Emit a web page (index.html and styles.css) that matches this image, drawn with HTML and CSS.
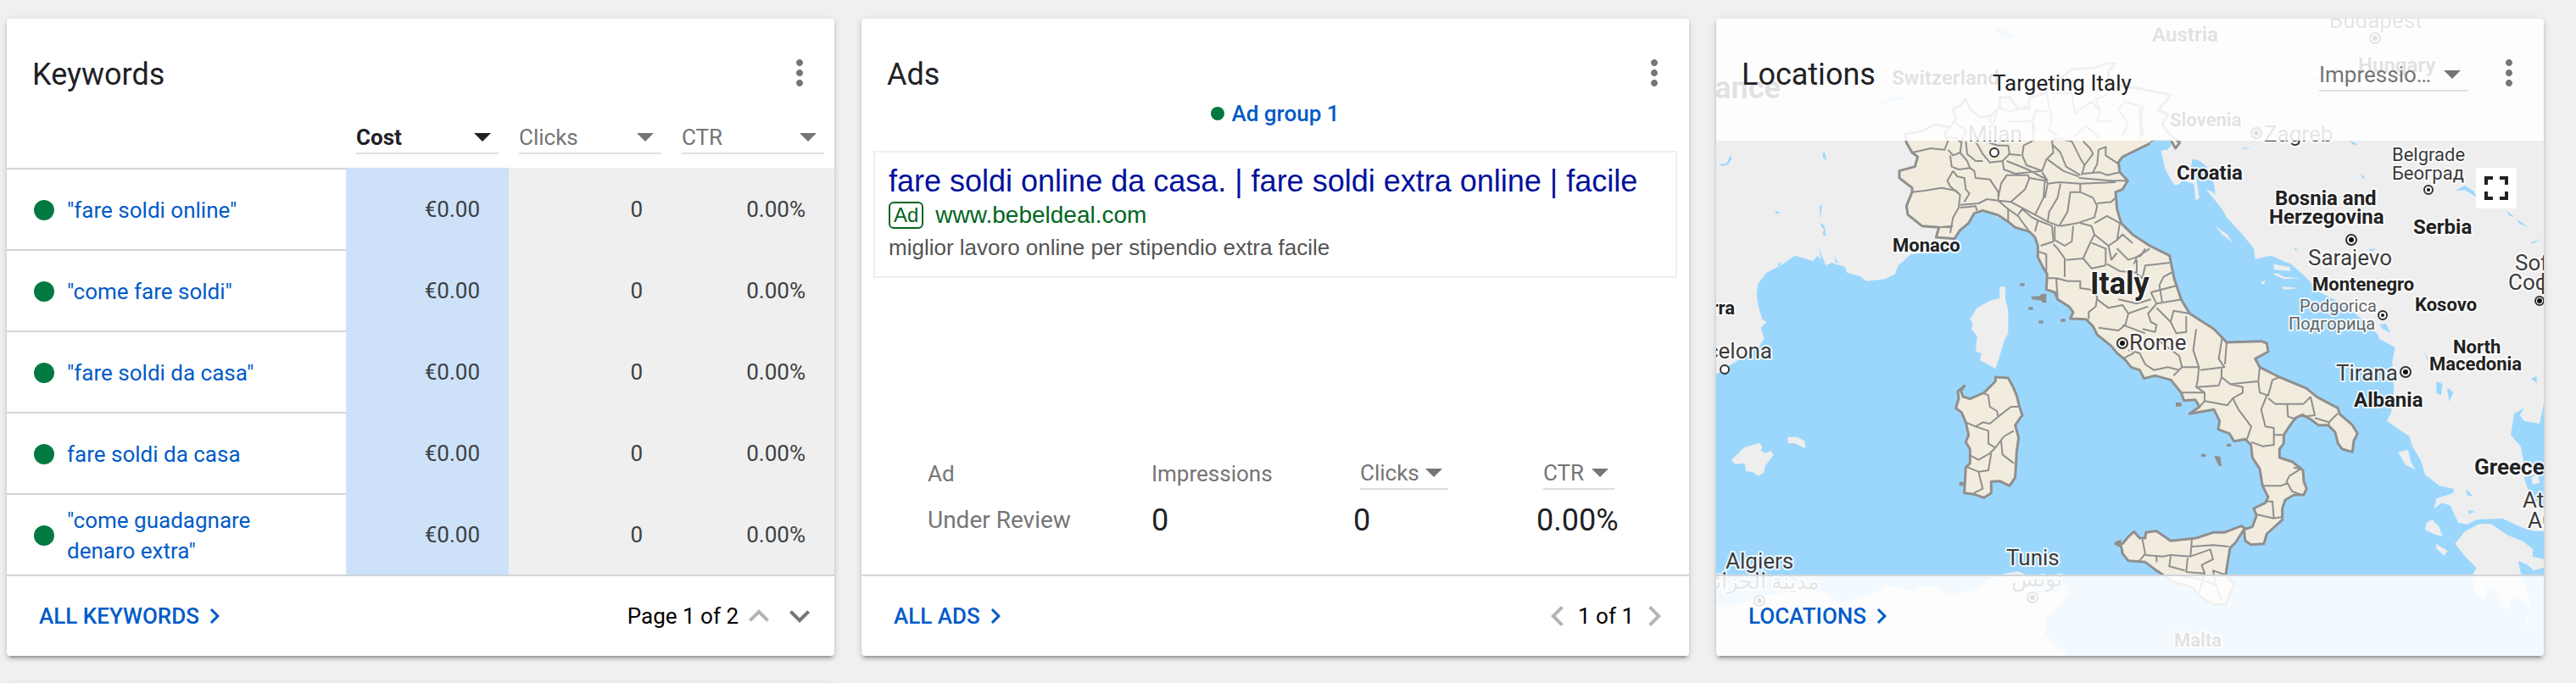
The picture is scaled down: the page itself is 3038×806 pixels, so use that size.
FILE: index.html
```html
<!DOCTYPE html>
<html lang="en">
<head>
<meta charset="utf-8">
<title>Overview</title>
<link rel="stylesheet" href="styles.css">
</head>
<body>
<svg class="sprite" aria-hidden="true">
  <symbol id="i-more" viewBox="0 0 24 24"><path d="M12 8c1.100 0 2-.9 2-2s-.9-2-2-2-2 .9-2 2 .9 2 2 2zm0 2c-1.100 0-2 .9-2 2s.9 2 2 2 2-.9 2-2-.9-2-2-2zm0 6c-1.100 0-2 .9-2 2s.9 2 2 2 2-.9 2-2-.9-2-2-2z"/></symbol>
  <symbol id="i-drop" viewBox="0 0 24 24"><path d="M7 10l5 5 5-5z"/></symbol>
  <symbol id="i-right" viewBox="0 0 24 24"><path d="M10 6L8.590 7.410 13.170 12l-4.580 4.590L10 18l6-6z"/></symbol>
  <symbol id="i-left" viewBox="0 0 24 24"><path d="M15.410 7.410L14 6l-6 6 6 6 1.410-1.410L10.830 12z"/></symbol>
  <symbol id="i-up" viewBox="0 0 24 24"><path d="M12 8l-6 6 1.410 1.410L12 10.830l4.590 4.580L18 14z"/></symbol>
  <symbol id="i-down" viewBox="0 0 24 24"><path d="M16.590 8.590L12 13.170 7.410 8.590 6 10l6 6 6-6z"/></symbol>
  <symbol id="i-full" viewBox="0 0 24 24"><path d="M7 14H5v5h5v-2H7v-3zm-2-4h2V7h3V5H5v5zm12 7h-3v2h5v-5h-2v3zM14 5v2h3v3h2V5h-5z"/></symbol>
</svg>

<main class="board">
  <section class="card">
    <header class="card-head">
      <h2 class="title">Keywords</h2>
      <button class="icon-btn" type="button" aria-label="More options"><svg class="icon"><use href="#i-more"/></svg></button>
    </header>
    <table class="kw">
      <colgroup><col><col class="kw-metric"><col class="kw-metric"><col class="kw-metric"></colgroup>
      <thead>
        <tr>
          <td></td>
          <th scope="col"><div class="pick pick-active"><select class="pick-select" aria-label="First metric"><option>Cost</option></select><svg class="icon pick-arrow"><use href="#i-drop"/></svg></div></th>
          <th scope="col"><div class="pick"><select class="pick-select" aria-label="Second metric"><option>Clicks</option></select><svg class="icon pick-arrow"><use href="#i-drop"/></svg></div></th>
          <th scope="col"><div class="pick"><select class="pick-select" aria-label="Third metric"><option>CTR</option></select><svg class="icon pick-arrow"><use href="#i-drop"/></svg></div></th>
        </tr>
      </thead>
      <tbody>
        <tr><th scope="row"><div class="kw-name"><span class="dot"></span><a href="#">"fare soldi online"</a></div></th><td class="hot">€0.00</td><td>0</td><td>0.00%</td></tr>
        <tr><th scope="row"><div class="kw-name"><span class="dot"></span><a href="#">"come fare soldi"</a></div></th><td class="hot">€0.00</td><td>0</td><td>0.00%</td></tr>
        <tr><th scope="row"><div class="kw-name"><span class="dot"></span><a href="#">"fare soldi da casa"</a></div></th><td class="hot">€0.00</td><td>0</td><td>0.00%</td></tr>
        <tr><th scope="row"><div class="kw-name"><span class="dot"></span><a href="#">fare soldi da casa</a></div></th><td class="hot">€0.00</td><td>0</td><td>0.00%</td></tr>
        <tr><th scope="row"><div class="kw-name"><span class="dot"></span><a href="#">"come guadagnare denaro extra"</a></div></th><td class="hot">€0.00</td><td>0</td><td>0.00%</td></tr>
      </tbody>
    </table>
    <footer class="card-foot">
      <a class="more" href="#">ALL KEYWORDS<svg class="icon more-icon"><use href="#i-right"/></svg></a>
      <div class="pager">
        <span>Page 1 of 2</span>
        <button class="icon-btn faded" type="button" aria-label="Previous page"><svg class="icon"><use href="#i-up"/></svg></button>
        <button class="icon-btn" type="button" aria-label="Next page"><svg class="icon"><use href="#i-down"/></svg></button>
      </div>
    </footer>
  </section>

  <section class="card">
    <header class="card-head">
      <h2 class="title">Ads</h2>
      <button class="icon-btn" type="button" aria-label="More options"><svg class="icon"><use href="#i-more"/></svg></button>
    </header>
    <p class="group"><span class="dot dot-small"></span><a href="#">Ad group 1</a></p>
    <article class="ad">
      <h3 class="ad-title">fare soldi online da casa. | fare soldi extra online | facile</h3>
      <p class="ad-url"><span class="ad-badge">Ad</span><span>www.bebeldeal.com</span></p>
      <p class="ad-text">miglior lavoro online per stipendio extra facile</p>
    </article>
    <table class="stats">
      <colgroup><col class="stats-a"><col class="stats-b"><col class="stats-c"><col></colgroup>
      <thead>
        <tr>
          <th scope="col">Ad</th>
          <th scope="col">Impressions</th>
          <th scope="col"><div class="pick pick-tight pick-clicks"><select class="pick-select" aria-label="Metric"><option>Clicks</option></select><svg class="icon pick-arrow"><use href="#i-drop"/></svg></div></th>
          <th scope="col"><div class="pick pick-tight pick-ctr"><select class="pick-select" aria-label="Rate metric"><option>CTR</option></select><svg class="icon pick-arrow"><use href="#i-drop"/></svg></div></th>
        </tr>
      </thead>
      <tbody>
        <tr><th scope="row">Under Review</th><td>0</td><td>0</td><td>0.00%</td></tr>
      </tbody>
    </table>
    <footer class="card-foot">
      <a class="more" href="#">ALL ADS<svg class="icon more-icon"><use href="#i-right"/></svg></a>
      <div class="pager">
        <button class="icon-btn faded" type="button" aria-label="Previous ad"><svg class="icon"><use href="#i-left"/></svg></button>
        <span>1 of 1</span>
        <button class="icon-btn faded" type="button" aria-label="Next ad"><svg class="icon"><use href="#i-right"/></svg></button>
      </div>
    </footer>
  </section>

  <section class="card card-map">
    <svg class="map" viewBox="0 0 976 752" preserveAspectRatio="xMidYMid slice" role="img" aria-label="Map of Italy">
      <g transform="translate(-14 -22) scale(.33333)">
        <g class="land">
          <path d="M42 66H2970V1430L2955 1500 2900 1490 2885 1470 2900 1445 2865 1465 2853 1540 2888 1580 2900 1640 2940 1680 2900 1690 2920 1750 2970 1800V1880H2934L2894 1868 2823 1835 2732 1840 2700 1856 2667 1850 2640 1790 2610 1780 2582 1800 2590 1765 2651 1745 2651 1730 2601 1720 2550 1680 2535 1630 2505 1580 2495 1545 2414 1490 2430 1460 2440 1380 2434 1280 2444 1230 2389 1200 2379 1180 2348 1150 2278 1090 2227 1060 2167 1030 2146 1000 2111 965 2076 935 2005 905 1949 917 1944 880 1904 830 1848 770 1808 690 1803 650 1778 590 1752 570 1727 562 1722 590 1742 640 1752 700 1738 710 1732 650 1692 640 1677 655 1662 655 1631 600 1616 535 1650 520V480H1600L1485 555 1465 575 1470 610 1498 640 1480 670 1455 680H1200L1075 785 985 745 955 755 905 815 885 845 860 870 790 895 730 900 715 915 685 940 675 970 640 988 575 995 550 978 505 965 497 945 450 930 430 940 400 905 385 925 345 912 320 905 270 940 220 965 190 1005 185 1040 190 1080 205 1130 220 1140 200 1160 212 1200 195 1225 120 1275 80 1300 42 1325z"/>
          <path d="M1045 1015H1065V1060L1075 1100V1180L1060 1210 1045 1260 1030 1305 975 1275 980 1250 960 1245 965 1190 945 1165 950 1150 940 1130 965 1090 1010 1065 1045 1055z"/>
          <path d="M95 1630L140 1585 195 1568 205 1580 200 1595 215 1605 235 1597 245 1610 215 1650 210 1675 190 1685 175 1673 147 1667 143 1640 110 1643zM295 1547L330 1547 355 1562 358 1588 320 1570 295 1568z"/>
          <path d="M42 2145L120 2140 200 2110 330 2090 430 2100 470 2135 530 2120 570 2110 630 2090 640 2070 690 2080 740 2095 770 2072 830 2080 860 2105 960 2090 1000 2055 1060 2032 1110 2022 1150 2040 1180 2100 1240 2100 1280 2070 1290 2100 1250 2150 1210 2190 1205 2240 1240 2290 1280 2310V2330H42z"/>
          <path d="M2656 1925L2692 1880 2742 1855 2783 1855 2843 1895 2894 1915 2932 1945 2930 1970 2970 1980V2010L2934 2020 2914 2000 2879 1985 2889 2030 2914 2100 2920 2150 2934 2175 2884 2110 2850 2125 2843 2170 2823 2140 2793 2080 2768 2080 2762 2120 2727 2100 2717 2040 2732 2010 2692 1970zM2455 1600L2490 1593 2500 1635 2515 1663 2480 1645zM2555 1850L2575 1840 2600 1865 2612 1900 2580 1890 2550 1875zM2588 1925L2630 1950 2617 1968 2590 1942zM2905 2190L2915 2185 2920 2225 2905 2215z"/>
          <path d="M2015 935L2070 945 2075 960 2015 955zM2010 970L2030 968 2050 980 2110 985 2050 988zM2045 1015L2105 1020 2050 1025zM1968 1000L1985 993 1980 1008zM1775 670L1800 680 1850 740 1888 772 1850 765 1820 725zM1808 800L1850 830 1870 860 1830 828z"/>
          <path d="M2925 1690L2950 1680 2955 1710 2930 1715zM2895 1820L2940 1850 2970 1845V1870L2920 1870z"/>
        </g>
        <g class="water">
          <path d="M52 582L80 578 92 550 97 560 85 582 62 588zM418 545L426 538 432 565 422 562zM248 752L258 748 268 753 258 757zM408 725L416 730 410 775zM413 788L425 800 430 835 418 830 424 812 413 800zM405 880L430 940 415 930zM460 908L475 932 465 930zM258 935L275 925 265 942z"/>
          <path d="M1020 88L1100 128 1060 138 1035 115zM612 388C630 350 670 330 715 350C680 352 640 355 612 388zM125 95L160 128 140 118zM960 400L975 410 965 420zM1340 180L1390 155 1360 178zM2130 288C2170 280 2200 265 2250 230L2238 258C2200 275 2170 290 2130 292z"/>
          <path d="M1905 523L1935 525 1905 528zM2280 495L2312 512 2295 512zM2322 615L2338 630 2328 632zM2086 880H2098L2092 888zM2656 675L2690 658 2720 675 2735 700 2690 672zM2837 745L2865 768 2850 765zM2872 775L2915 803 2885 792zM2922 858L2960 848 2930 862zM2389 1150L2410 1145 2428 1178 2400 1165zM2350 882L2378 880 2358 890zM2590 1350L2612 1360 2606 1400 2590 1392zM2628 1372L2650 1390 2635 1422zM2548 1245L2562 1275 2555 1270zM2925 1340L2945 1332V1355zM2694 1730L2718 1755 2700 1755zM2705 1805L2725 1812 2705 1820z"/>
        </g>
        <path class="region" d="M885 845L905 815 935 790 955 755 985 745 1040 762 1075 785 1100 805 1150 820 1170 840 1180 870V910L1200 950 1213 970 1210 1025 1240 1035 1250 1060 1290 1085 1305 1105 1295 1128 1350 1130 1375 1155 1390 1185 1440 1225 1460 1250 1490 1275 1510 1300 1540 1310 1556 1340 1596 1330 1651 1345 1687 1390 1697 1418 1737 1415 1752 1440 1717 1465 1803 1450 1823 1490 1818 1520 1858 1535 1874 1562 1914 1555 1934 1575 1939 1620 1965 1660 1975 1720 1995 1760 1985 1780 1944 1800 1954 1825 1939 1865 1909 1875 1914 1915 1934 1928 1980 1925 1990 1890 2045 1840V1800L2055 1770 2086 1752 2121 1752 2131 1730 2121 1705 2118 1665 2081 1635 2035 1620V1590L2050 1570V1540L2066 1515 2091 1480 2116 1468 2146 1485 2172 1505 2207 1505 2232 1530 2242 1570 2257 1590 2293 1600 2298 1560 2311 1535 2293 1505 2247 1465 2242 1445 2167 1405 2131 1375 2035 1335 1965 1300 1949 1270 1995 1245 1990 1215 1970 1208 1848 1212 1803 1165 1717 1110 1687 1060 1662 985 1646 905 1576 870 1515 830 1475 790 1460 740 1455 680 1480 670 1498 640 1470 610 1465 575 1480 555 1576 508 1591 498 1651 498 1667 525 1682 505 1641 470 1620 440 1641 405 1606 390 1651 335 1530 312 1450 300 1430 290V250L1455 225H1420L1380 240 1300 245 1270 270 1210 300V330L1150 345V385H1110L1080 345H1045V380L1015 410 975 415 940 385 925 350 905 375 880 385 890 420 870 450 815 440 770 465 710 475 715 505 735 540 755 555 745 590 690 605V630L735 665V680L715 730 720 760 770 800 830 805 820 840z"/>
        <path class="water" d="M1576 508L1591 498H1651L1640 530H1590z"/>
        <path class="region" d="M1030 1335L1075 1338 1090 1365 1105 1400 1115 1440 1125 1470 1100 1505 1112 1550 1105 1600 1100 1690 1080 1720 1045 1703 1015 1705V1745L990 1762 955 1750 920 1745 925 1655 940 1640V1590L925 1565 935 1540 925 1495 910 1460 890 1445 900 1410 897 1385 920 1366 908 1385 915 1404 940 1412 990 1390 1030 1350z"/>
        <path class="region" d="M1455 1925L1480 1925 1500 1900 1520 1882 1540 1905 1560 1905 1562 1885 1600 1880 1650 1915 1740 1905 1800 1885 1840 1885 1900 1862 1912 1870 1880 1920 1860 1940 1850 2000 1845 2035 1875 2070 1860 2100 1845 2140 1800 2140 1750 2110 1730 2080 1660 2060 1600 2020 1560 1990 1500 1985 1480 1960 1475 1935z"/>
        <g class="provinces">
          <path d="M735 540L760 535 800 525 850 530 862 500 850 470 870 450M862 530L880 550 905 540 910 505 890 490 850 485M870 550L875 590 900 600 940 595 930 570 905 540M880 605L860 640 870 660 905 690M880 605L895 625 920 630 925 670 938 685 920 715M735 680L780 675 840 665 890 675 905 690 900 735 880 770 870 825M905 735L960 730 965 745M830 805L880 800"/>
          <path d="M940 595L955 605 960 630 1010 635 1040 680V710L1000 705 970 720 905 725M925 500L930 545 960 570 985 570M960 500L985 545 1010 575 1055 570 1080 545 1075 515 1040 515 1005 505M1040 700L1050 650 1070 620 1145 620 1150 630 1135 670 1085 715 1040 710M1055 570L1060 600 1100 615 1195 605 1140 585 1125 550 1130 515 1160 500M1075 545L1120 550M1070 570L1145 600 1200 630"/>
          <path d="M1195 605L1210 565 1235 540 1230 500 1245 490 1300 500M1215 565L1270 605 1325 625M1300 500L1330 560 1345 585 1335 620M1230 510L1260 540 1280 590 1330 620M1345 585L1375 545 1365 525 1340 500M1340 615L1400 610 1425 620 1470 610M1390 580L1395 530 1420 520V550L1465 580M1325 630L1440 640 1495 640M1200 625L1215 650 1255 645 1330 650 1455 645M1195 610L1215 640M1390 580L1375 610"/>
          <path d="M1150 630L1205 640 1200 700 1170 760 1085 715M1205 700L1215 650M1260 650L1250 700 1220 750 1215 785M1330 650V680L1295 680 1285 750 1255 800 1215 785 1170 760M1330 680L1375 700 1390 730 1380 770 1320 790 1260 800M1390 720L1440 715 1455 700M1380 790L1425 765 1470 790M1075 740V785M1075 740L1040 710M1075 740L1110 765 1150 820M1110 760L1125 740 1160 770 1180 780 1170 820M1180 780L1230 800 1235 855 1190 870"/>
          <path d="M1240 800V850L1275 870 1300 855 1305 800M1330 790L1370 800 1380 830 1365 860 1340 915 1280 920M1235 865L1250 880 1275 915V980M1180 890L1210 900V960M1380 830L1430 870 1460 850 1470 790M1370 860L1420 880V940M1430 870L1440 920 1460 895M1460 880L1500 920 1545 905 1560 880M1460 850L1480 830 1515 860M1425 935L1470 960 1530 965V920M1245 985L1285 995H1330V1020L1365 1025 1390 1050 1385 1085 1360 1105V1130M1215 985H1245L1250 1055M1340 915L1370 950 1420 940"/>
          <path d="M1390 1060L1430 1090 1480 1080 1500 1110 1490 1150 1465 1170 1395 1160M1500 1110L1570 1085M1480 1150L1560 1180M1465 1060L1530 1075 1580 1060M1530 970L1550 985 1560 940 1646 930M1520 935L1530 910 1576 880M1610 1010L1625 980 1662 960M1580 1035L1675 1010M1580 1035L1600 1075 1690 1060M1600 1075L1570 1110 1580 1140 1600 1150 1595 1175 1550 1165M1600 1090L1650 1140 1660 1100 1717 1110M1650 1140L1670 1180 1705 1175V1120M1610 1010L1620 1070"/>
          <path d="M1500 1240L1540 1250 1560 1290 1590 1310 1640 1300 1680 1310M1480 1270L1520 1250M1600 1200L1680 1260 1690 1300 1660 1330M1740 1165L1730 1240 1750 1300H1690M1833 1190L1820 1270 1840 1300 1755 1310M1750 1300L1745 1350 1740 1370 1770 1390H1690M1830 1300V1335L1860 1360 1905 1370V1390L1870 1410 1850 1435 1770 1420V1390M1745 1370L1820 1365 1830 1335M1848 1212L1842 1290M1860 1360L1960 1350 1965 1300M1960 1350L1965 1390 1995 1400 2010 1345 2035 1335"/>
          <path d="M1995 1410L2020 1430H2120L2145 1405M1752 1440L1770 1420M1870 1410L1890 1450 1935 1510 1920 1555M1990 1400L1970 1450 1985 1510 2015 1515V1575L1975 1580 1935 1565M2062 1430L2065 1475 2095 1485M2015 1540H2050M2145 1405L2160 1470 2120 1475M2160 1480L2210 1495 2240 1465M2210 1495V1510M2085 1655L2110 1660 2070 1685 2060 1705 2080 1740 2110 1750M1975 1720H2040L2065 1710M1990 1775H2010L2015 1835 1950 1820M2015 1835L2045 1830"/>
          <path d="M985 1390L1005 1400 1010 1440 1035 1455 1040 1475 1085 1440H1110M1040 1475L1010 1500 985 1495 960 1510 925 1495M960 1510L1005 1525V1570L1030 1585 1060 1545 1095 1525M1050 1560L1055 1610 1095 1640M1030 1585L1010 1605 970 1628 940 1612M1015 1605L1005 1665 970 1670 925 1652M970 1670L985 1730 955 1745"/>
          <path d="M1550 1910L1560 1960 1540 1985M1560 1965L1620 1970 1650 1965 1720 1970 1725 1910M1725 1935L1800 1930 1855 1935M1720 1970L1790 1945 1800 1980 1760 2000 1770 2030 1705 2025 1710 1975M1600 1970V1990M1650 1970L1645 2005 1700 2020M1750 2050L1810 2070 1800 2020 1845 2035M1750 2050L1690 2040M1770 2030L1750 2100M1810 2070L1830 2130"/>
          <path d="M880 430L925 460 910 500M1010 415L1020 450 1040 380 1080 395 1145 375M1070 430L1160 430 1170 460M1175 390L1160 430 1165 500M1170 390L1215 395M1210 330L1230 420 1220 460 1250 480M1230 330L1300 330 1310 400 1370 360 1400 390 1390 430 1440 430M1400 390L1385 350 1420 340 1440 300M1310 480L1350 445 1400 490M1465 385L1490 360 1540 375 1545 490M1465 385L1500 440 1480 480M1550 372L1545 430 1555 480"/>
        </g>
        <path class="islets" d="M1117 1003h16v10h-16zM1155 1050L1185 1048 1195 1040 1210 1040V1072H1195V1065L1160 1060zM1147 1087h16v10h-16zM1183 1135h16v10h-16zM1261 1129h16v10h-16zM902 1706h16v14h-16zM1668 1425h20v14h-20zM1848 1571h16v10h-16zM1758 1607h16v10h-16zM1803 1613L1825 1616 1830 1650H1820zM1452 1918L1475 1910V1935z"/>
      </g>
      <g class="pins">
        <circle cx="777" cy="23" r="6"/><circle cx="637" cy="135" r="6"/><circle cx="840" cy="202" r="5"/><circle cx="749" cy="261" r="6"/><circle cx="786" cy="350" r="5"/><circle cx="971" cy="333" r="5"/><circle cx="479" cy="383" r="6"/><circle cx="813" cy="417" r="6"/><circle cx="51" cy="687" r="6"/><circle cx="373" cy="683" r="6"/><circle cx="328" cy="158" r="5"/><circle cx="10" cy="414" r="5"/>
      </g>
      <g class="pin-dots">
        <circle cx="777" cy="23" r="3"/><circle cx="637" cy="135" r="3"/><circle cx="840" cy="202" r="2"/><circle cx="749" cy="261" r="3"/><circle cx="786" cy="350" r="2"/><circle cx="971" cy="333" r="3"/><circle cx="479" cy="383" r="3"/><circle cx="813" cy="417" r="3"/><circle cx="51" cy="687" r="3"/><circle cx="373" cy="683" r="3"/>
      </g>
      <g class="country">
        <text x="514" y="27" class="mid">Austria</text>
        <text x="757" y="63" class="mid">Hungary</text>
        <text x="207" y="78" class="mid">Switzerland</text>
        <text x="76" y="94" class="big end">France</text>
        <text x="535" y="127">Slovenia</text>
        <text x="543" y="190" class="mid">Croatia</text>
        <text x="659" y="220" class="mid">Bosnia and</text>
        <text x="652" y="242" class="mid">Herzegovina</text>
        <text x="822" y="254" class="mid">Serbia</text>
        <text x="208" y="275">Monaco</text>
        <text x="703" y="321">Montenegro</text>
        <text x="441" y="325" class="big">Italy</text>
        <text x="824" y="345">Kosovo</text>
        <text x="22" y="349" class="end">Andorra</text>
        <text x="869" y="395">North</text>
        <text x="841" y="415">Macedonia</text>
        <text x="752" y="458" class="mid">Albania</text>
        <text x="894" y="538" class="wide">Greece</text>
        <text x="540" y="741">Malta</text>
      </g>
      <g class="city">
        <text x="723" y="11">Budapest</text>
        <text x="646" y="145">Zagreb</text>
        <text x="297" y="145">Milan</text>
        <text x="797" y="168" class="small">Belgrade</text>
        <text x="797" y="190" class="small">Београд</text>
        <text x="698" y="291">Sarajevo</text>
        <text x="942" y="297">Sofia</text>
        <text x="934" y="320">София</text>
        <text x="688" y="346" class="tiny pale">Podgorica</text>
        <text x="675" y="367" class="tiny pale">Подгорица</text>
        <text x="487" y="391">Rome</text>
        <text x="66" y="401" class="end">Barcelona</text>
        <text x="731" y="427">Tirana</text>
        <text x="951" y="577">Athens</text>
        <text x="957" y="601">Αθήνα</text>
        <text x="11" y="649">Algiers</text>
        <text x="342" y="645">Tunis</text>
        <text x="-15" y="673">مدينة الجزائر</text>
        <text x="348" y="670">تونس</text>
      </g>
    </svg>
    <header class="card-head map-head">
      <h2 class="title">Locations</h2>
      <p class="target">Targeting Italy</p>
      <div class="pick map-pick"><select class="pick-select" aria-label="Map metric"><option>Impressions</option></select><svg class="icon pick-arrow"><use href="#i-drop"/></svg></div>
      <button class="icon-btn" type="button" aria-label="More options"><svg class="icon"><use href="#i-more"/></svg></button>
    </header>
    <div class="map-body">
      <button class="icon-btn full" type="button" aria-label="Full screen"><svg class="icon"><use href="#i-full"/></svg></button>
    </div>
    <footer class="card-foot map-foot">
      <a class="more" href="#">LOCATIONS<svg class="icon more-icon"><use href="#i-right"/></svg></a>
    </footer>
  </section>

  <section class="card card-next"></section>
</main>
</body>
</html>
```
FILE: styles.css
```css
* { box-sizing: border-box; }
html, body { height: 100%; }
body {
  margin: 0;
  background: #eff0f2;
  color: #202124;
  font: 26px/36px Roboto, sans-serif;
}
h2, h3, p { margin: 0; font-weight: 400; }
a { color: #005bc8; text-decoration: none; }
.sprite { position: absolute; width: 0; height: 0; }

.board {
  display: grid;
  grid-template-columns: repeat(3, 1fr);
  align-content: start;
  gap: 32px;
  height: 100%;
  padding: 22px 38px 0 8px;
  overflow: hidden;
}
.card {
  display: flex;
  flex-direction: column;
  min-width: 0;
  background: #fff;
  border-radius: 4px;
  box-shadow: 0 4px 4px rgba(0, 0, 0, .14), 0 6px 2px -4px rgba(0, 0, 0, .2), 0 2px 10px rgba(0, 0, 0, .12);
}
.card-next { min-height: 16px; }

.card-head {
  display: flex;
  justify-content: space-between;
  align-items: flex-start;
  padding: 40px 17px 0 30px;
}
.title { font-size: 36px; line-height: 52px; }

.icon { display: block; width: 48px; height: 48px; fill: currentColor; }
.icon-btn {
  flex: none;
  width: 48px;
  height: 48px;
  padding: 0;
  border: 0;
  background: none;
  color: #757575;
}
.faded { color: #b4b4b4; }

.dot {
  flex: none;
  width: 24px;
  height: 24px;
  border-radius: 50%;
  background: #007a41;
}
.dot-small { width: 16px; height: 16px; }

.pick { display: grid; grid-template-rows: 38px; align-items: center; color: #757575; }
.pick-select, .pick-arrow { grid-area: 1 / 1; }
.pick-select {
  width: 100%;
  height: 38px;
  margin: 0;
  padding: 0 36px 0 0;
  border: 0;
  border-bottom: 2px solid #dfdfdf;
  border-radius: 0;
  appearance: none;
  background: none;
  color: inherit;
  font: inherit;
  line-height: 36px;
  text-overflow: ellipsis;
  overflow: hidden;
  white-space: nowrap;
}
.pick-arrow { justify-self: end; margin: -4px -5px 0 0; pointer-events: none; }
.pick-active { color: #202124; font-weight: 700; }
.pick-tight .pick-select { padding-right: 24px; }
.pick-tight .pick-arrow { margin-right: -7px; }

.kw { width: 100%; table-layout: fixed; border-spacing: 0; }
.kw th, .kw td { padding: 0; font-weight: 400; }
.kw-metric { width: 192px; }
.kw thead th { height: 84px; padding: 0 12px 16px; vertical-align: bottom; text-align: left; }
.kw tbody th { height: 96px; border-top: 2px solid #d2d6da; text-align: left; }
.kw tbody td { padding: 2px 34px 0 0; background: #efefef; color: #3c4043; text-align: right; }
.kw tbody .hot { background: #cde2f9; }
.kw-name { display: flex; align-items: center; gap: 15px; padding: 2px 48px 0 32px; }

.card-foot {
  display: flex;
  justify-content: space-between;
  align-items: center;
  height: 96px;
  padding: 0 17px 0 38px;
  border-top: 2px solid #d2d6da;
}
.more { display: flex; align-items: center; font-weight: 500; }
.more-icon { width: 36px; height: 36px; }
.pager { display: flex; align-items: center; color: #000; }

.group { display: flex; justify-content: center; align-items: center; gap: 8px; padding-top: 2px; font-weight: 500; }
.ad {
  margin: 26px 14px 0;
  padding: 12px 16px 16px;
  border: 2px solid #efefef;
  font-family: "Liberation Sans", Arial, sans-serif;
}
.ad-title { color: #00109c; font-size: 36px; line-height: 44px; }
.ad-url { display: flex; align-items: center; gap: 14px; height: 32px; margin-top: 2px; color: #006621; font-size: 28px; }
.ad-badge {
  height: 32px;
  padding: 0 4px;
  border: 2px solid #006621;
  border-radius: 6px;
  font-size: 24px;
  line-height: 28px;
}
.ad-text { margin-top: 4px; color: #545454; }

.stats {
  margin: auto 0 40px 78px;
  table-layout: fixed;
  border-spacing: 0;
  width: calc(100% - 78px);
}
.stats-a { width: 264px; }
.stats-b { width: 238px; }
.stats-c { width: 216px; }
.stats th, .stats td { padding: 0; text-align: left; font-weight: 400; }
.stats thead th { height: 50px; padding-bottom: 12px; color: #757575; }
.stats tbody th { color: #757575; font-size: 28px; }
.stats td { height: 48px; font-size: 36px; line-height: 48px; }
.pick-clicks { width: 104px; margin-left: 8px; }
.pick-ctr { width: 84px; margin-left: 8px; }

.card-map { position: relative; overflow: hidden; isolation: isolate; }
.map { position: absolute; inset: 0; z-index: -1; width: 100%; height: 100%; background: #9bd7fd; }
.map-head {
  display: grid;
  grid-template-columns: 296px 1fr 176px 48px;
  height: 144px;
  background: rgba(255, 255, 255, .87);
}
.target { margin-top: 18px; }
.map-pick { margin: 8px 24px 0 -24px; width: 176px; }
.map-body { display: flex; flex: 1; justify-content: flex-end; align-items: flex-start; padding: 32px; }
.full { background: #fff; color: #202124; }
.map-foot { background: rgba(255, 255, 255, .87); background-clip: padding-box; }

.land { fill: #eee; }
.water { fill: #9bd7fd; }
.region { fill: #f2ecdf; stroke: #8f8f8f; stroke-width: 9; stroke-linejoin: round; }
.provinces { fill: none; stroke: #8f8f8f; stroke-width: 6; stroke-linejoin: round; }
.islets { fill: #8f8f8f; }
.pins { fill: #fff; stroke: #333; stroke-width: 2; }
.pin-dots { fill: #111; }
.country, .city {
  stroke: #fff;
  stroke-opacity: .8;
  stroke-width: 4px;
  stroke-linejoin: round;
  paint-order: stroke;
}
.country { fill: #222; font-size: 22px; font-weight: 700; }
.city { fill: #3c3c3c; font-size: 26px; }
.country .mid { font-size: 24px; }
.country .wide { font-size: 26px; }
.country .big { font-size: 36px; }
.city .small { font-size: 22px; }
.city .tiny { font-size: 20px; }
.city .pale { fill: #666; }
.end { text-anchor: end; }
```
